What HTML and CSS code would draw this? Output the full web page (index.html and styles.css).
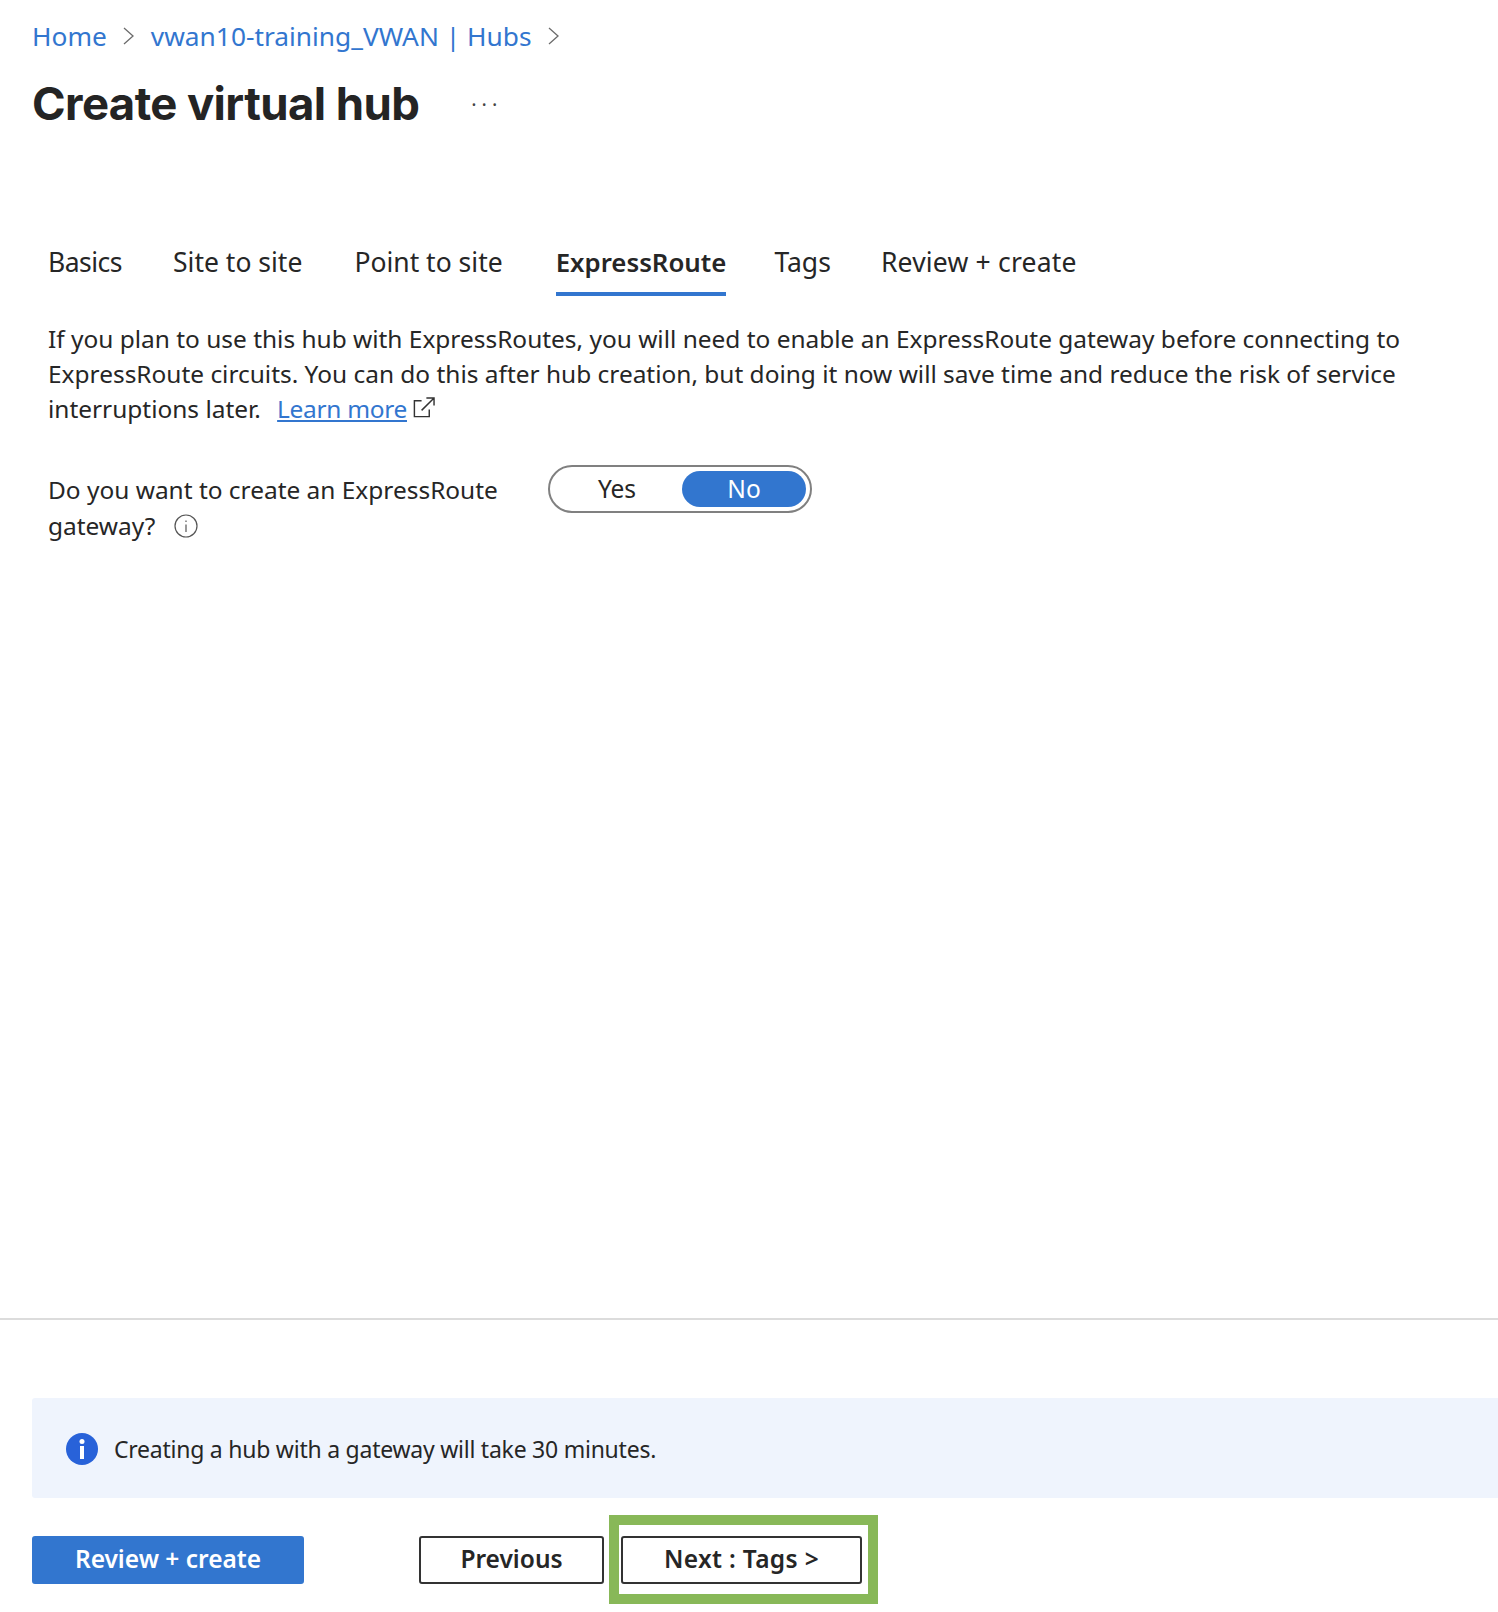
FILE: index.html
```html
<!DOCTYPE html>
<html lang="en">
<head>
<meta charset="utf-8">
<title>Create virtual hub</title>
<link rel="stylesheet" href="styles.css">
</head>
<body>
<div class="page">
  <nav class="crumbs">
    <a class="crumb">Home</a>
    <svg class="chev" viewBox="0 0 14 20"><path d="M2 2l9 8-9 8" /></svg>
    <a class="crumb">vwan10-training_VWAN | Hubs</a>
    <svg class="chev" viewBox="0 0 14 20"><path d="M2 2l9 8-9 8" /></svg>
  </nav>
  <header class="title-row">
    <h1 class="title">Create virtual hub</h1>
    <span class="more">···</span>
  </header>
  <main class="content">
    <div class="tabs">
      <span class="tab first">Basics</span>
      <span class="tab">Site to site</span>
      <span class="tab point">Point to site</span>
      <span class="tab active">ExpressRoute</span>
      <span class="tab">Tags</span>
      <span class="tab last">Review + create</span>
    </div>
    <p class="intro">If you plan to use this hub with ExpressRoutes, you will need to enable an ExpressRoute gateway before connecting to ExpressRoute circuits. You can do this after hub creation, but doing it now will save time and reduce the risk of service interruptions later. <a class="learn">Learn more</a>
      <svg class="ext" viewBox="0 0 24 24"><path d="M10 5H2.500v16.500H18V14M10 15L22.500 2.500M15 2h8v8" /></svg></p>
    <div class="field">
      <div class="label">Do you want to create an ExpressRoute gateway?
        <svg class="tip" viewBox="0 0 24 24"><circle cx="12" cy="12" r="11" /><path d="M12 10.500V18M12 6.500v1.500" /></svg></div>
      <div class="toggle">
        <span class="opt">Yes</span>
        <span class="opt on">No</span>
      </div>
    </div>
  </main>
  <footer class="foot">
    <div class="notice">
      <svg class="info" viewBox="0 0 32 32"><circle cx="16" cy="16" r="16" /><rect x="14" y="13" width="4" height="13" /><circle cx="16" cy="8.500" r="2.500" /></svg>
      <span>Creating a hub with a gateway will take 30 minutes.</span>
    </div>
    <div class="actions">
      <button class="btn primary">Review + create</button>
      <button class="btn prev">Previous</button>
      <div class="highlight"><button class="btn next">Next : Tags &gt;</button></div>
    </div>
  </footer>
</div>
</body>
</html>
```
FILE: styles.css
```css
* { box-sizing: border-box; }
html, body { margin: 0; background: #fff; }
body { font-family: "Noto Sans", "Open Sans", sans-serif; color: #262626; overflow: hidden; }
.page { width: 1498px; height: 1612px; display: flex; flex-direction: column; }
.crumbs { display: flex; align-items: center; height: 36px; margin: 18px 0 0 32px; font-size: 26.300px; color: #3276cf; }
.crumb { white-space: nowrap; }
.chev { width: 14px; height: 20px; margin: 0 15px; fill: none; stroke: #6b6b6b; stroke-width: 1.300; }
.title-row { display: flex; align-items: center; margin: 21px 0 0 32px; height: 56px; }
.title { margin: 0; font-family: Inter, sans-serif; font-weight: 700; font-size: 45.500px; letter-spacing: -0.6px; color: #242424; white-space: nowrap; }
.more { margin-left: 52px; padding-top: 2px; font-size: 20px; color: #444; letter-spacing: 5px; }
.content { flex: 1; padding: 0 0 0 48px; }
.tabs { display: flex; gap: 51px; margin-top: 105px; height: 60px; font-size: 26.500px; }
.tab { height: 60px; line-height: 52px; white-space: nowrap; }
.tab.first { letter-spacing: -0.5px; }
.tab.point { margin-left: 1px; margin-right: 2px; }
.tab.active { font-size: 25.800px; font-weight: 600; border-bottom: 4px solid #3276cf; margin-right: -3px; }
.tab.last { margin-left: -1px; letter-spacing: 0.2px; }
.intro { margin: 25px 0 0; width: 1420px; font-size: 24.450px; line-height: 35px; }
.learn { color: #3276cf; text-decoration: underline; margin-left: 10px; letter-spacing: -0.3px; }
.ext { width: 23px; height: 23px; fill: none; stroke: #333; stroke-width: 1.500; vertical-align: -1px; margin-left: -1px; }
.field { display: flex; margin-top: 39px; }
.label { width: 500px; font-size: 24.450px; line-height: 36px; padding-top: 7px; }
.tip { width: 24px; height: 24px; fill: none; stroke: #555; stroke-width: 1.200; margin-left: 12px; vertical-align: -3px; }
.toggle { display: flex; align-items: center; justify-content: space-between; width: 264px; height: 48px; padding: 0 4px 0 5px; border: 2px solid #808080; border-radius: 24px; font-size: 24.500px; }
.opt { display: block; width: 124px; height: 36px; line-height: 36px; text-align: center; border-radius: 18px; }
.opt.on { background: #3276cf; color: #fff; }
.foot { height: 294px; border-top: 2px solid #dcdcdc; padding-left: 32px; }
.notice { display: flex; align-items: center; gap: 16px; height: 100px; margin-top: 78px; padding: 2px 0 0 34px; background: #eff4fd; border-radius: 3px 0 0 3px; font-size: 23px; letter-spacing: -0.24px; }
.info { width: 32px; height: 32px; fill: #2862d9; flex: none; }
.info rect, .info circle + rect + circle { fill: #fff; }
.actions { display: flex; align-items: center; margin-top: 17px; }
.btn { height: 48px; padding: 0 0 3px; font-family: inherit; font-size: 24.500px; font-weight: 600; border-radius: 3px; background: #fff; color: #262626; border: 2px solid #333; }
.btn.primary { width: 272px; background: #3276cf; border-color: #3276cf; color: #fff; }
.btn.prev { width: 185px; margin-left: 115px; }
.highlight { margin-left: 5px; padding: 11px 6px 10px 2px; border: 10px solid #88b858; }
.btn.next { display: block; width: 241px; letter-spacing: 0.35px; }
```
